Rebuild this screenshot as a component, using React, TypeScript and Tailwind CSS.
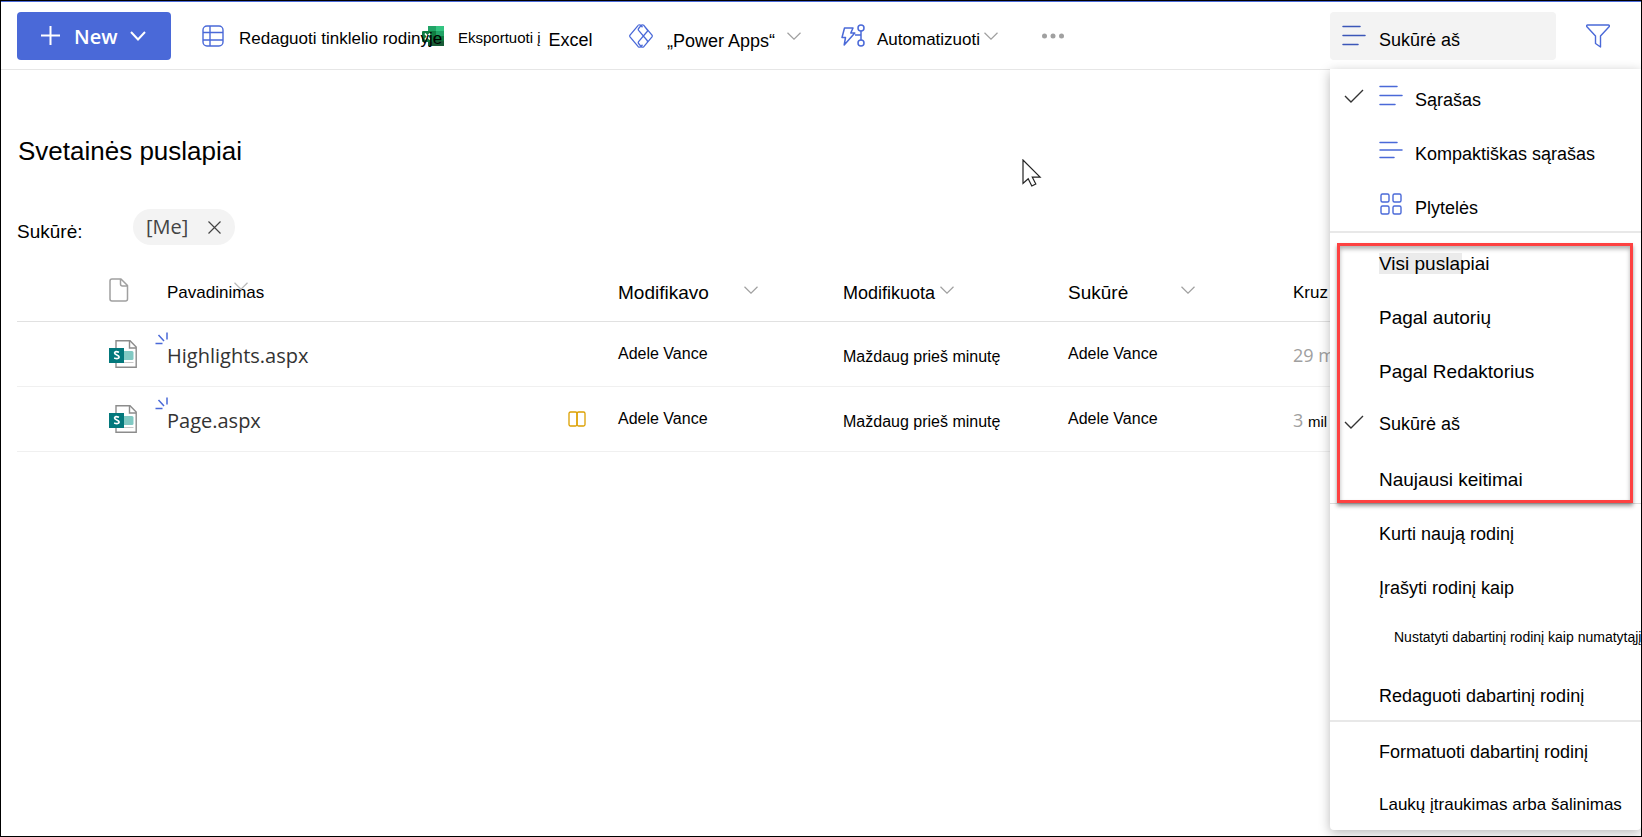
import React from 'react';

const SEGOE = "font-['Open_Sans','Noto_Sans',sans-serif]";

function Chevron({ className = '' }: { className?: string }) {
  return (
    <svg viewBox="0 0 14 8" className={`h-2 w-3.5 shrink-0 ${className}`} fill="none" stroke="currentColor">
      <path d="M0.5 0.8 7 7.2 13.5 0.8" strokeWidth="1.2" />
    </svg>
  );
}

function Check() {
  return (
    <svg viewBox="0 0 20 14" className="h-3.5 w-5" fill="none" stroke="#333" strokeWidth="1.4">
      <path d="M1 7 7 13 19 1" />
    </svg>
  );
}

function GridIcon() {
  return (
    <svg viewBox="0 0 22 22" className="h-[22px] w-[22px] shrink-0" fill="none" stroke="#4a69d8" strokeWidth="1.4">
      <rect x="1" y="1" width="20" height="20" rx="4" />
      <path d="M8 1v20M1 7.5h20M1 15h20" />
    </svg>
  );
}

function ExcelIcon() {
  return (
    <svg viewBox="0 0 22 20" className="h-5 w-[22px] shrink-0">
      <path fill="#21a366" d="M6 0h8v5H6z" />
      <path fill="#33c481" d="M14 0h8v5h-8z" />
      <path fill="#107c41" d="M6 5h8v5H6z" />
      <path fill="#21a366" d="M14 5h8v5h-8z" />
      <path fill="#185c37" d="M6 10h8v10H6z" />
      <path fill="#107c41" d="M14 10h8v5h-8z" />
      <path fill="#185c37" d="M14 15h8v5h-8z" />
      <rect y="5" width="11" height="11" rx="1" fill="#107c41" />
      <path d="M3 7.5 8 13.5M8 7.5 3 13.5" stroke="#fff" strokeWidth="1.6" />
    </svg>
  );
}

function PowerAppsIcon() {
  return (
    <svg viewBox="0 0 24 24" className="h-6 w-6 shrink-0" fill="none" stroke="#4a69d8" strokeWidth="1.3" strokeLinejoin="round">
      <path d="M9.2 1.3 1 11.2q-.5.8 0 1.600l8.200 9.900q1.300 1 2.600 0L13.500 20.800" />
      <path d="M9.2 1.3q1.300-1 2.600 0L13.500 3.200" />
      <path d="M14.800 1.300 23 11.200q.5.800 0 1.600l-8.200 9.900q-1.300 1-2.600 0L9.600 19.500q-.7-.9 0-1.800l8.600-10.200q.7-.9 0-1.700L14.800 1.300q-1.300-1-2.600 0L9.600 4.500q-.7.900 0 1.800l8.600 10.200q.7.900 0 1.700" />
    </svg>
  );
}

function AutomateIcon() {
  return (
    <svg viewBox="0 0 24 24" className="h-6 w-6 shrink-0" fill="none" stroke="#4a69d8" strokeWidth="1.5" strokeLinejoin="round">
      <path d="M3.500 4h8.500L9.800 9h4L3.200 21l1.300-7.500H1z" />
      <circle cx="20" cy="4" r="3" />
      <circle cx="20" cy="19" r="3" />
      <path d="M20 7v9M14 11h6" />
    </svg>
  );
}

function ListIcon({ compact = false, color = '#4a69d8' }: { compact?: boolean; color?: string }) {
  return (
    <svg viewBox="0 0 24 22" className="h-[22px] w-6 shrink-0" fill="none" stroke={color} strokeWidth="1.5" strokeLinecap="round">
      <path d={compact ? 'M1 3.500h17M1 11h22M1 18.500h14' : 'M1 1.500h17M1 10.500h22M1 19.500h15'} />
    </svg>
  );
}

function TilesIcon() {
  return (
    <svg viewBox="0 0 24 24" className="h-6 w-6 shrink-0" fill="none" stroke="#4a69d8" strokeWidth="1.4">
      <rect x="2" y="2" width="8" height="8" rx="1.5" />
      <rect x="14" y="2" width="8" height="8" rx="1.5" />
      <rect x="2" y="14" width="8" height="8" rx="1.5" />
      <rect x="14" y="14" width="8" height="8" rx="1.5" />
    </svg>
  );
}

function FunnelIcon() {
  return (
    <svg viewBox="0 0 24 24" className="h-6 w-6" fill="none" stroke="#4a69d8" strokeWidth="1.4" strokeLinejoin="round">
      <path d="M1.500 1h21q1 0 .8 1.500L14.500 12v11l-5-3.500V12L.7 2.500Q.5 1 1.500 1z" />
    </svg>
  );
}

function FileIcon() {
  return (
    <svg viewBox="0 0 20 24" className="h-6 w-5" fill="none" stroke="#a0a0a0" strokeWidth="1.5" strokeLinejoin="round">
      <path d="M3 1h9l6.500 6.500V21q0 2-2 2H3q-2 0-2-2V3q0-2 2-2zM11.500 1v5q0 2 2 2h5" />
    </svg>
  );
}

function PageIcon() {
  return (
    <svg viewBox="0 0 28 28" className="h-7 w-7">
      <path d="M7 .8h14L27.200 7v20.200H7z" fill="#fff" stroke="#8c8c8c" strokeWidth="1.4" />
      <path d="M20.500 1v7h6.500" fill="none" stroke="#8c8c8c" strokeWidth="1.4" />
      <path d="M15 11h8q1.500 0 1.500 1.500v6q0 1.500-1.500 1.500h-8z" fill="#81c9c3" />
      <path d="M10 22.500h14.500" stroke="#c8c8c8" />
      <path d="M0 8h15v15H0z" fill="#03787c" />
      <path d="M10 12.300q-4-1.600-4.400.7c0 2.400 4.500 1.600 4.500 4.100q-.5 2.400-5 .9" fill="none" stroke="#fff" strokeWidth="1.7" />
    </svg>
  );
}

function NewMark() {
  return (
    <svg viewBox="0 0 13 13" className="absolute -top-1.5 -left-3 h-[13px] w-[13px]" stroke="#4a69d8" strokeWidth="1.5">
      <path d="M12 .5v7M3.500 3l5.500 6M.5 11.500h7" />
    </svg>
  );
}

function BookIcon() {
  return (
    <svg viewBox="0 0 18 16" className="h-4 w-[18px]" fill="none" stroke="#dca000" strokeWidth="1.3">
      <rect x="1" y="1" width="8" height="14" rx="1.5" />
      <rect x="9" y="1" width="8" height="14" rx="1.5" />
    </svg>
  );
}

type ItemProps = {
  label: string;
  size?: string;
  checked?: boolean;
  icon?: React.ReactNode;
  shift?: string;
  mark?: string;
};

function MenuItem({ label, size = 'text-lg', checked, icon, shift = 'pt-2', mark = '' }: ItemProps) {
  return (
    <li>
      <button type="button" role="menuitemradio" aria-checked={!!checked} className="flex h-[54px] w-full items-center pl-3.5 text-left">
        <span className="w-[35px] shrink-0">{checked && <Check />}</span>
        {icon && <span className="w-9 shrink-0">{icon}</span>}
        <span className={`whitespace-nowrap ${size} ${shift}`}>
          <span className={mark}>{label}</span>
        </span>
      </button>
    </li>
  );
}

function ViewMenu() {
  return (
    <div role="menu" className="absolute top-full right-0 z-20 w-[311px] rounded-b bg-white shadow-[0_3px_12px_rgba(0,0,0,0.28)]">
      <ul className="border-b-2 border-[#e8e8e8]">
        <MenuItem label="Sąrašas" checked icon={<ListIcon />} />
        <MenuItem label="Kompaktiškas sąrašas" icon={<ListIcon compact />} />
        <MenuItem label="Plytelės" icon={<TilesIcon />} />
      </ul>
      <ul className="relative border-b border-[#dcdcdc]">
        <MenuItem
          label="Visi puslapiai"
          size="text-[19px]"
          mark="bg-[linear-gradient(#ebebeb,#ebebeb)] bg-[length:83px_100%] bg-no-repeat"
        />
        <MenuItem label="Pagal autorių" size="text-[19px]" />
        <MenuItem label="Pagal Redaktorius" size="text-[19px]" />
        <MenuItem label="Sukūrė aš" checked shift="pt-1" />
        <MenuItem label="Naujausi keitimai" size="text-[19px]" />
        <li
          aria-hidden="true"
          className="pointer-events-none absolute top-2.5 right-2 bottom-0 left-[7px] border-[3px] border-[#fd4141] shadow-[0_3px_4px_rgba(0,0,0,0.4),inset_0_3px_4px_rgba(0,0,0,0.3)]"
        />
      </ul>
      <ul className="border-b-2 border-[#e8e8e8]">
        <MenuItem label="Kurti naują rodinį" shift="pt-1.5" />
        <MenuItem label="Įrašyti rodinį kaip" shift="pt-1.5" />
        <MenuItem label="Nustatyti dabartinį rodinį kaip numatytąjį" size="text-sm pl-[15px]" shift="pb-1" />
        <MenuItem label="Redaguoti dabartinį rodinį" shift="pt-1.5" />
      </ul>
      <ul>
        <MenuItem label="Formatuoti dabartinį rodinį" shift="pt-1.5" />
        <MenuItem label="Laukų įtraukimas arba šalinimas" size="text-[17px]" shift="pt-1" />
      </ul>
    </div>
  );
}

function CommandBar() {
  return (
    <header className="relative flex h-[69px] items-center border-t border-b border-t-[#4a69d8] border-b-[#e6e6e6] pl-4 whitespace-nowrap">
      <button type="button" className={`flex h-12 w-[154px] shrink-0 items-center rounded-sm bg-[#4a69d8] pl-6 text-xl font-semibold text-white ${SEGOE}`}>
        <svg viewBox="0 0 19 19" className="mr-3.5 h-[19px] w-[19px]" stroke="currentColor" strokeWidth="2">
          <path d="M9.500 0v19M0 9.500h19" />
        </svg>
        <span className="pt-0.5">New</span>
        <svg viewBox="0 0 16 10" className="ml-3 h-2.5 w-4" fill="none" stroke="currentColor" strokeWidth="2">
          <path d="M1 1 8 8.500 15 1" />
        </svg>
      </button>
      <button type="button" className="relative z-10 ml-[31px] flex w-[220px] shrink-0 items-center gap-[15px] text-[17px]">
        <GridIcon />
        <span className="pt-1.5">Redaguoti tinklelio rodinyje</span>
      </button>
      <button type="button" className="flex w-[207px] shrink-0 items-center">
        <ExcelIcon />
        <span className="ml-3.5 pt-1.5 text-[15px]">Eksportuoti į</span>
        <span className="ml-2 pt-2 text-lg">Excel</span>
      </button>
      <button type="button" className="flex w-[212px] shrink-0 items-center">
        <PowerAppsIcon />
        <span className="ml-3.5 pt-2.5 text-lg">„Power Apps“</span>
        <Chevron className="ml-3 text-[#a0a0a0]" />
      </button>
      <button type="button" className="flex w-[201px] shrink-0 items-center">
        <AutomateIcon />
        <span className="ml-3 pt-2 text-[17px]">Automatizuoti</span>
        <Chevron className="ml-1 text-[#a0a0a0]" />
      </button>
      <button type="button" aria-label="Daugiau" className="shrink-0">
        <svg viewBox="0 0 22 6" className="h-1.5 w-[22px]" fill="#a0a0a0">
          <circle cx="2.500" cy="3" r="2.500" />
          <circle cx="11" cy="3" r="2.500" />
          <circle cx="19.500" cy="3" r="2.500" />
        </svg>
      </button>
      <button type="button" aria-haspopup="menu" className="ml-auto flex h-12 w-[226px] shrink-0 items-center gap-[13px] rounded bg-[#f3f3f3] pl-3 text-lg">
        <ListIcon color="#3b56b8" />
        <span className="pt-2">Sukūrė aš</span>
      </button>
      <button type="button" aria-label="Filtrai" className="mr-[31px] ml-[30px] shrink-0">
        <FunnelIcon />
      </button>
      <ViewMenu />
    </header>
  );
}

const rows = [
  { name: 'Highlights.aspx', book: false, count: <span className={`text-lg text-[#a0a0a0] ${SEGOE}`}>29 m</span> },
  {
    name: 'Page.aspx',
    book: true,
    count: (
      <span className={`text-lg text-[#a0a0a0] ${SEGOE}`}>
        3 <span className="font-['Liberation_Sans',sans-serif] text-[15px] text-black">mil</span>
      </span>
    ),
  },
];

function PagesTable() {
  return (
    <table className="ml-4 w-[calc(100%-16px)] table-fixed border-collapse text-left whitespace-nowrap">
      <colgroup>
        <col className="w-[150px]" />
        <col />
        <col className="w-[225px]" />
        <col className="w-[225px]" />
        <col className="w-[225px]" />
        <col className="w-[348px]" />
      </colgroup>
      <thead>
        <tr className="h-[62px] border-b border-[#e1e1e1]">
          <th className="pl-[92px]" aria-label="Tipas">
            <FileIcon />
          </th>
          <th className="font-normal">
            <span className="relative inline-block pt-1.5 text-[17px]">
              Pavadinimas
              <Chevron className="absolute top-2 right-4 text-[#b8b8b8]" />
            </span>
          </th>
          <th className="font-normal">
            <span className="flex items-center">
              <span className="w-[126px] pt-1.5 text-[19px]">Modifikavo</span>
              <Chevron className="text-[#a0a0a0]" />
            </span>
          </th>
          <th className="font-normal">
            <span className="flex items-center gap-[5px]">
              <span className="pt-1.5 text-lg">Modifikuota</span>
              <Chevron className="text-[#a0a0a0]" />
            </span>
          </th>
          <th className="font-normal">
            <span className="flex items-center">
              <span className="w-[113px] pt-1.5 text-[19px]">Sukūrė</span>
              <Chevron className="text-[#a0a0a0]" />
            </span>
          </th>
          <th className="pt-1.5 text-[17px] font-normal">Kruz</th>
        </tr>
      </thead>
      <tbody>
        {rows.map((r) => (
          <tr key={r.name} className="h-[65px] border-b border-[#f0f0f0]">
            <td className="pl-[92px]">
              <PageIcon />
            </td>
            <td>
              <span className="flex items-center justify-between pr-8">
                <a href="#" className={`relative pt-1 text-xl text-[#333] ${SEGOE}`}>
                  <NewMark />
                  {r.name}
                </a>
                {r.book && <BookIcon />}
              </span>
            </td>
            <td className="text-base">Adele Vance</td>
            <td className="pt-1.5 text-base">Maždaug prieš minutę</td>
            <td className="text-base">Adele Vance</td>
            <td className="pt-0.5">{r.count}</td>
          </tr>
        ))}
      </tbody>
    </table>
  );
}

export default function App() {
  return (
    <div className="relative min-h-screen overflow-hidden border border-black bg-white font-['Liberation_Sans',Arial,sans-serif] text-black">
      <CommandBar />
      <main>
        <h1 className="mt-[65px] ml-[17px] text-[26px] leading-8">Svetainės puslapiai</h1>
        <div className="mt-[42px] ml-4 flex h-9 items-center">
          <span className="w-[116px] pt-2.5 text-[19px]">Sukūrė:</span>
          <span className={`flex h-9 items-center gap-5 rounded-full bg-[#f3f3f3] pr-3.5 pl-[13px] text-xl text-[#444] ${SEGOE}`}>
            [Me]
            <button type="button" aria-label="Pašalinti filtrą">
              <svg viewBox="0 0 13 13" className="h-[13px] w-[13px]" stroke="#444" strokeWidth="1.2">
                <path d="M.5.5l12 12M12.500.5l-12 12" />
              </svg>
            </button>
          </span>
        </div>
        <div className="mt-3.5">
          <PagesTable />
        </div>
      </main>
      <svg viewBox="0 0 20 28" className="absolute top-[158px] left-[1021px] h-7 w-5" fill="#fff" stroke="#222" strokeWidth="1.2">
        <path d="M1 1v23.500l5.200-4.700 3.600 7.200 4-2-3.500-6.800h7.800z" />
      </svg>
    </div>
  );
}
